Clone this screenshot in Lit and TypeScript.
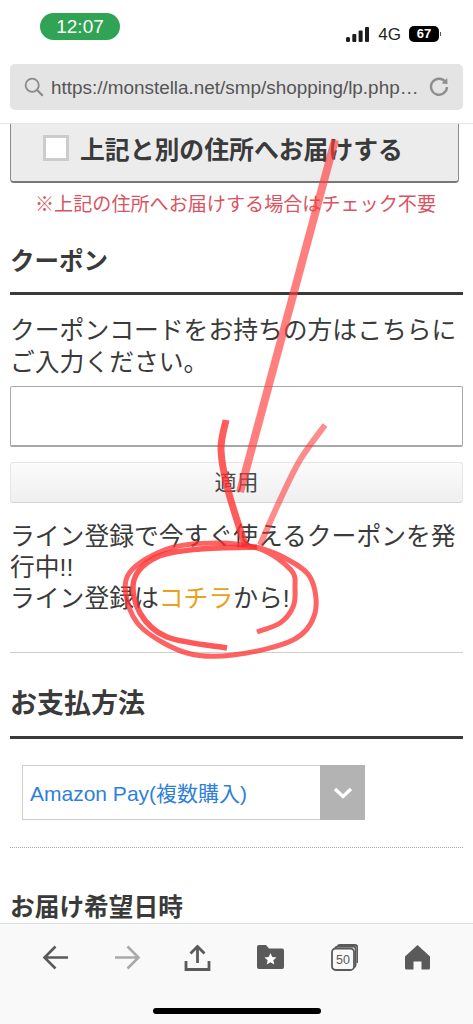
import { LitElement, css, html, svg } from "lit";
import { customElement } from "lit/decorators.js";

type Pt = [number, number];

// smooth line through the hand-drawn marker points
function smooth(pts: Pt[]) {
  let d = `M${pts[0][0]} ${pts[0][1]}`;
  for (let i = 0; i < pts.length - 1; i++) {
    const p0 = pts[Math.max(i - 1, 0)];
    const p1 = pts[i];
    const p2 = pts[i + 1];
    const p3 = pts[Math.min(i + 2, pts.length - 1)];
    const c1 = [p1[0] + (p2[0] - p0[0]) / 6, p1[1] + (p2[1] - p0[1]) / 6];
    const c2 = [p2[0] - (p3[0] - p1[0]) / 6, p2[1] - (p3[1] - p1[1]) / 6];
    d += ` C${c1[0]} ${c1[1]} ${c2[0]} ${c2[1]} ${p2[0]} ${p2[1]}`;
  }
  return d;
}

const loopOuter: Pt[] = [
  [257, 632], [280, 623], [293, 607], [295, 588], [291, 570], [260, 549], [217, 543], [167, 549],
  [130, 572], [127, 600], [143, 629], [187, 653], [233, 655], [293, 640], [315, 613],
  [310, 577], [283, 557], [257, 547],
];
const loopInner: Pt[] = [
  [257, 547], [200, 549], [157, 557], [134, 580], [140, 613], [167, 637], [227, 648],
];
const headLeft: Pt[] = [[226, 420], [221, 450], [228, 490], [245, 545]];
const headRight: Pt[] = [[325, 425], [300, 460], [280, 500], [260, 545]];

@customElement("app-root")
export class AppRoot extends LitElement {
  static styles = css`
    :host {
      display: block;
      font-family: "Liberation Sans", "Noto Sans CJK JP", sans-serif;
      color: #3a3a3a;
    }
    .screen {
      position: relative;
      width: 473px;
      height: 1024px;
      overflow: hidden;
      background: #fff;
      display: flex;
      flex-direction: column;
    }
    .browser-top {
      height: 123px;
      flex: none;
      border-bottom: 1px solid #e6e6e6;
    }
    .status {
      height: 64px;
      display: flex;
      align-items: flex-start;
      justify-content: space-between;
      padding: 13px 34px 0 40px;
      box-sizing: border-box;
    }
    .clock {
      width: 80px;
      height: 27px;
      border-radius: 14px;
      background: #31a354;
      color: #fff;
      font-size: 19px;
      line-height: 27px;
      text-align: center;
    }
    .status-right {
      display: flex;
      align-items: center;
      gap: 9px;
      margin-top: 10px;
      color: #222;
    }
    .net {
      font-size: 17px;
      line-height: 20px;
      padding-top: 2px;
      margin-right: -1px;
    }
    .battery {
      width: 30px;
      height: 16px;
      border-radius: 5px;
      background: #000;
      color: #fff;
      font-size: 13px;
      font-weight: 700;
      line-height: 16px;
      text-align: center;
      position: relative;
    }
    .battery::after {
      content: "";
      position: absolute;
      right: -2px;
      top: 6px;
      width: 1px;
      height: 4px;
      background: #555;
    }
    .url {
      margin: 0 10px;
      height: 46px;
      border-radius: 5px;
      background: #e4e4e4;
      display: flex;
      align-items: center;
      padding: 0 14px 0 14px;
      box-sizing: border-box;
      color: #555;
    }
    .url-text {
      flex: 1;
      margin-left: 7px;
      padding-top: 2px;
      font-size: 18.9px;
      white-space: nowrap;
    }
    .content {
      flex: 1;
      min-height: 0;
      overflow: hidden;
    }
    .address-btn {
      margin: 0 14px 0 10px;
      height: 59px;
      box-sizing: border-box;
      background: #ececec;
      border: 1px solid #8c8c8c;
      border-top: none;
      border-bottom: 2px solid #777;
      border-radius: 0 0 4px 4px;
      display: flex;
      align-items: center;
      padding: 0 0 9px 32px;
      gap: 11px;
      font-size: 24.85px;
      font-weight: 700;
      white-space: nowrap;
    }
    .check {
      width: 26px;
      height: 26px;
      box-sizing: border-box;
      background: #fff;
      border: 3px solid #ccc;
    }
    .note {
      margin-top: 9px;
      padding-right: 2px;
      text-align: center;
      color: #d9545f;
      font-size: 19.1px;
      line-height: 26px;
      white-space: nowrap;
    }
    .heading {
      margin: 0 10px;
      font-size: 24.5px;
      font-weight: 700;
      line-height: 34px;
      border-bottom: 3px solid #3a3a3a;
      white-space: nowrap;
    }
    .coupon-head {
      margin-top: 27px;
      padding-bottom: 13px;
    }
    .body-text {
      margin: 20px 10px 0;
      font-size: 24.8px;
      line-height: 32px;
    }
    .coupon-input {
      margin: 7px 10px 0;
      height: 61px;
      box-sizing: border-box;
      border: 1px solid #a8a8a8;
      border-bottom-width: 2px;
      border-radius: 2px;
      background: #fff;
    }
    .apply {
      margin: 15px 10px 0;
      height: 41px;
      box-sizing: border-box;
      border: 1px solid #e6e6e6;
      border-bottom-color: #d4d4d4;
      border-radius: 3px;
      background: linear-gradient(#fbfbfb, #efefef);
      text-align: center;
      font-size: 22px;
      line-height: 40px;
      color: #4a4a4a;
    }
    .line-text {
      margin: 18px 10px 0;
      font-size: 24.8px;
      line-height: 31px;
    }
    .link {
      color: #e8a21e;
    }
    .rule {
      margin: 38px 10px 0;
      height: 1px;
      background: #cfcfcf;
    }
    .pay-head {
      margin-top: 34px;
      padding-bottom: 15px;
      font-size: 27px;
    }
    .select {
      margin: 26px 0 0 22px;
      width: 343px;
      height: 55px;
      box-sizing: border-box;
      border: 1px solid #cfcfcf;
      display: flex;
      align-items: center;
      background: #fff;
    }
    .select-text {
      flex: 1;
      padding: 0 0 2px 7px;
      color: #2f80d8;
      font-size: 21px;
      white-space: nowrap;
    }
    .select-arrow {
      width: 45px;
      height: 55px;
      margin-right: -1px;
      background: #b3b3b3;
      display: flex;
      align-items: center;
      justify-content: center;
    }
    .dotted {
      margin: 27px 10px 0;
      border-top: 1px dotted #aaa;
    }
    .delivery-head {
      margin: 43px 10px 0;
      font-size: 24.7px;
      font-weight: 700;
      line-height: 34px;
      white-space: nowrap;
    }
    .toolbar {
      flex: none;
      height: 101px;
      box-sizing: border-box;
      background: #f9f9f9;
      border-top: 1px solid #dedede;
      position: relative;
    }
    .tools {
      display: grid;
      grid-template-columns: 72px 70px 73px 74px 73px auto;
      padding: 20px 0 0 42px;
    }
    .tools svg {
      display: block;
      width: 27px;
      height: 27px;
    }
    .home-bar {
      position: absolute;
      left: 153px;
      bottom: 10px;
      width: 168px;
      height: 6px;
      border-radius: 3px;
      background: #000;
    }
    .marker {
      position: absolute;
      left: 0;
      top: 0;
      width: 473px;
      height: 1024px;
      pointer-events: none;
      fill: none;
      stroke: #ff2e2e;
      stroke-linecap: butt;
      stroke-linejoin: round;
    }
  `;

  renderStatus() {
    return html`
      <div class="status">
        <div class="clock">12:07</div>
        <div class="status-right">
          <svg width="23" height="15" viewBox="0 0 23 15" fill="#1c1c1c">
            <rect x="0" y="10" width="4" height="5" rx="1.5"></rect>
            <rect x="6.3" y="7" width="4" height="8" rx="1"></rect>
            <rect x="12.6" y="3.5" width="4" height="11.5" rx="1"></rect>
            <rect x="19" y="0" width="4" height="15" rx="1"></rect>
          </svg>
          <span class="net">4G</span>
          <span class="battery">67</span>
        </div>
      </div>
    `;
  }

  renderMarker() {
    return html`
      <svg class="marker" viewBox="0 0 473 1024">
        ${svg`
          <path d="M335 140 L240 492" stroke-width="8" stroke-opacity="0.66" stroke="#ff3c3c"></path>
          <path d="${smooth(headRight)}" stroke-width="6" stroke-opacity="0.55"></path>
          <path d="${smooth(headLeft)}" stroke-width="7" stroke-opacity="0.78"></path>
          <path d="${smooth(loopOuter)}" stroke-width="5" stroke-opacity="0.75"></path>
          <path d="${smooth(loopInner)}" stroke-width="5.5" stroke-opacity="0.8"></path>
        `}
      </svg>
    `;
  }

  render() {
    return html`
      <div class="screen">
        <div class="browser-top">
          ${this.renderStatus()}
          <div class="url">
            <svg width="20" height="20" viewBox="0 0 20 20" fill="none" stroke="#8a8a8a" stroke-width="1.8">
              <circle cx="8.2" cy="8.2" r="6.6"></circle>
              <path d="M13 13 L18.8 18.8" stroke-width="2.2"></path>
            </svg>
            <span class="url-text">https://monstella.net/smp/shopping/lp.php…</span>
            <svg width="20" height="20" viewBox="0 0 20 20" fill="none" stroke="#8e8e8e" stroke-width="2.4">
              <path d="M16.6 5.2 A8 8 0 1 0 18 10"></path>
              <path d="M12.6 6.6 L18.6 7 L18.2 1 Z" fill="#8e8e8e" stroke="none"></path>
            </svg>
          </div>
        </div>

        <div class="content">
          <div class="address-btn">
            <span class="check"></span>
            <span>上記と別の住所へお届けする</span>
          </div>
          <div class="note">※上記の住所へお届けする場合はチェック不要</div>

          <div class="heading coupon-head">クーポン</div>
          <div class="body-text">クーポンコードをお持ちの方はこちらにご入力ください。</div>
          <div class="coupon-input"></div>
          <div class="apply">適用</div>
          <div class="line-text">
            ライン登録で今すぐ使えるクーポンを発行中!!<br />
            ライン登録は<span class="link">コチラ</span>から!
          </div>
          <div class="rule"></div>

          <div class="heading pay-head">お支払方法</div>
          <div class="select">
            <span class="select-text">Amazon Pay(複数購入)</span>
            <span class="select-arrow">
              <svg width="20" height="12" viewBox="0 0 20 12" fill="none" stroke="#fff" stroke-width="3.4">
                <path d="M2 2 L10 9.5 L18 2"></path>
              </svg>
            </span>
          </div>
          <div class="dotted"></div>
          <div class="delivery-head">お届け希望日時</div>
        </div>

        <div class="toolbar">
          <div class="tools">
            <svg viewBox="0 0 27 27" fill="none" stroke="#5a5a5a" stroke-width="2.6">
              <path d="M26 13.5 H3 M13.5 2.5 L2.5 13.5 L13.5 24.5"></path>
            </svg>
            <svg viewBox="0 0 27 27" fill="none" stroke="#a9a9a9" stroke-width="2.6">
              <path d="M1 13.5 H24 M13.5 2.5 L24.5 13.5 L13.5 24.5"></path>
            </svg>
            <svg viewBox="0 0 27 27" fill="none" stroke="#5a5a5a" stroke-width="2.8">
              <path d="M13.5 19 V3 M6.5 9.5 L13.5 2.5 L20.5 9.5"></path>
              <path d="M2 17 V25.5 H25 V17"></path>
            </svg>
            <svg viewBox="0 0 27 27">
              <path d="M0 3 Q0 1 2 1 H9 L12 4.5 H25 Q27 4.5 27 6.5 V23 Q27 25 25 25 H2 Q0 25 0 23 Z" fill="#5a5a5a"></path>
              <path d="M13.5 9 L15.3 13 L19.6 13.4 L16.3 16.2 L17.3 20.4 L13.5 18.2 L9.7 20.4 L10.7 16.2 L7.4 13.4 L11.7 13 Z" fill="#fff"></path>
            </svg>
            <svg viewBox="0 0 27 27" fill="none" stroke="#5a5a5a" stroke-width="1.8">
              <rect x="1" y="4.5" width="22" height="21.5" rx="3.5" fill="#f9f9f9"></rect>
              <path d="M4.5 4.5 V4 Q4.5 2.6 6.5 2.6 H22.5 Q24.6 2.6 24.6 5 V21 Q24.6 23 23 23.4"></path>
              <path d="M7 2.4 V2.2 Q7 1 9 1 H24 Q26.4 1 26.4 3.4 V19"></path>
              ${svg`<text x="12" y="20" text-anchor="middle" font-size="12.5" fill="#5a5a5a" stroke="none" font-family="Liberation Sans">50</text>`}
            </svg>
            <svg viewBox="0 0 27 27">
              <path d="M13.5 1 L26 12.5 V24 Q26 25.5 24.5 25.5 H17.5 V17.5 H9.5 V25.5 H2.5 Q1 25.5 1 24 V12.5 Z" fill="#5a5a5a"></path>
            </svg>
          </div>
          <div class="home-bar"></div>
        </div>

        ${this.renderMarker()}
      </div>
    `;
  }
}

declare global {
  interface HTMLElementTagNameMap {
    "app-root": AppRoot;
  }
}
